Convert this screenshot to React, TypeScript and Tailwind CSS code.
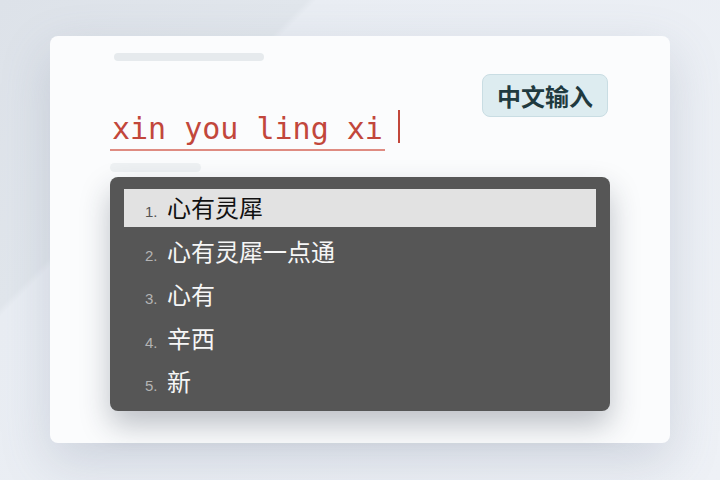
import React from "react";

const candidates = ["心有灵犀", "心有灵犀一点通", "心有", "辛西", "新"];

export default function App() {
  return (
    <div className="w-[720px] h-[480px] overflow-hidden bg-[linear-gradient(135deg,#dde2e9_0%,#e1e6ec_25.6%,#e9edf3_26.4%,#eef1f6_100%)] pt-[36px] pl-[50px]">
      <div className="w-[620px] h-[407px] rounded-[8px] bg-[#fbfcfd] shadow-[0_18px_50px_rgba(100,116,139,0.22)] pl-[60px]">
        {/* placeholder bar */}
        <div className="ml-[4px] pt-[17px]">
          <div className="w-[150px] h-[8px] rounded-full bg-[#e6eaed]" />
        </div>

        <div className="w-[500px] flex justify-between items-start mt-[13px]">
          <div className="mt-[37px] flex items-start">
            <span className="block px-[2px] pb-[2px] border-b-2 border-[#df8c82] text-[30px] leading-[36px] text-[#c2473b] font-['DejaVu_Sans_Mono',monospace] whitespace-pre">
              xin you ling xi
            </span>
            <span className="block ml-[13px] -mt-[1px] w-[2px] h-[33px] bg-[#c2473b]" />
          </div>
          <div className="mr-[2px] h-[43px] px-[14px] flex items-center rounded-[8px] bg-[#ddecf0] border border-[#c9dde3] text-[24px] font-bold text-[#1f3a3f] font-['Noto_Sans_CJK_SC',sans-serif]">
            中文输入
          </div>
        </div>

        <div className="mt-[12px] w-[91px] h-[9px] rounded-full bg-[#eef1f3]" />

        {/* candidate list */}
        <div className="mt-[5px] w-[500px] rounded-[8px] bg-[#565656] px-[14px] pt-[12px] pb-[10px] flex flex-col gap-[5.5px] shadow-[0_14px_30px_rgba(30,41,59,0.28)]">
          {candidates.map((c, i) => {
            const selected = i === 0;
            return (
              <div
                key={c}
                className={
                  "h-[38px] flex items-center pl-[21px] " +
                  (selected ? "bg-[#e2e2e2]" : "")
                }
              >
                <div className="flex items-baseline">
                  <span
                    className={
                      "w-[22px] text-[15px] font-['Liberation_Sans',sans-serif] " +
                      (selected ? "text-[#555555]" : "text-[#b4b4b4]")
                    }
                  >
                    {i + 1}.
                  </span>
                  <span
                    className={
                      "text-[24px] leading-[30px] font-['Noto_Sans_CJK_SC',sans-serif] " +
                      (selected ? "text-[#111111]" : "text-[#f6f6f6]")
                    }
                  >
                    {c}
                  </span>
                </div>
              </div>
            );
          })}
        </div>
      </div>
    </div>
  );
}
